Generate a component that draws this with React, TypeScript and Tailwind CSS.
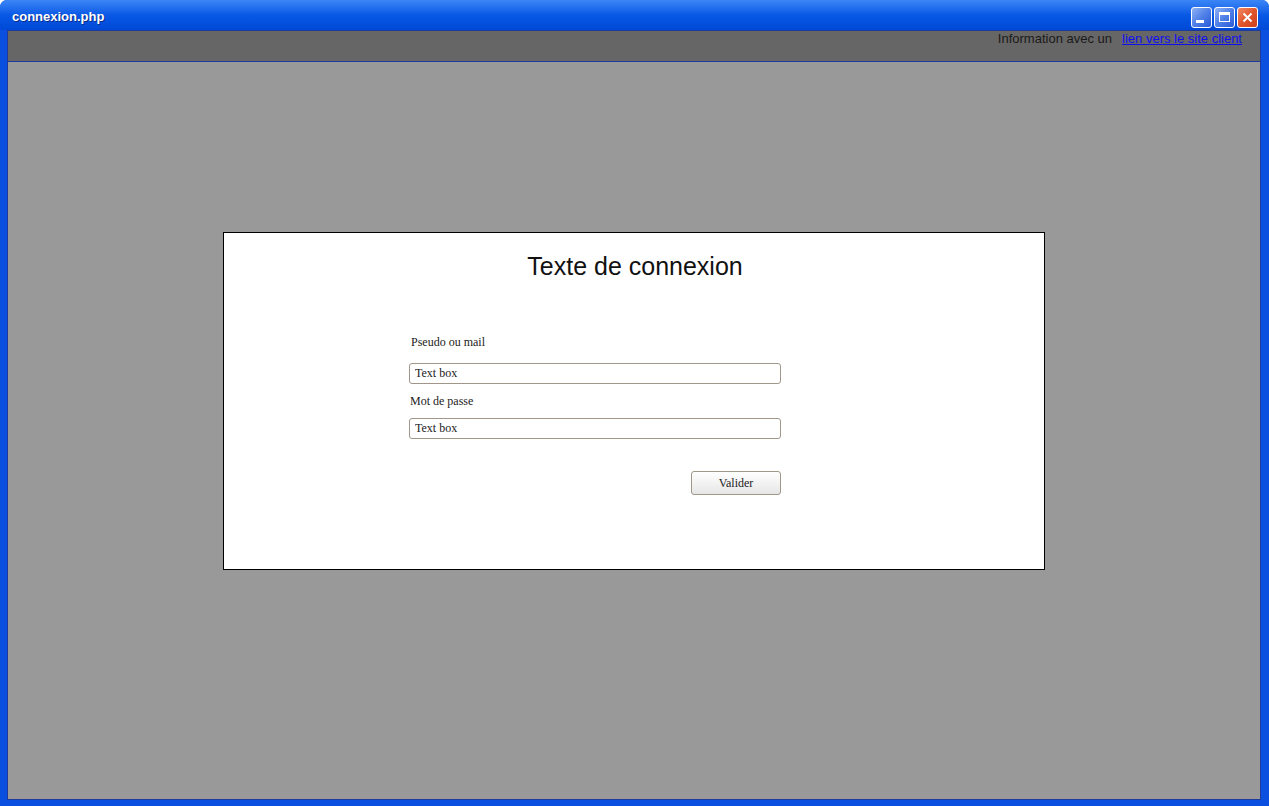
import React from "react";

function TitleButton({ kind }: { kind: "min" | "max" | "close" }) {
  const bg =
    kind === "close"
      ? "bg-gradient-to-br from-[#f08a63] via-[#e1552a] to-[#c9401b]"
      : "bg-gradient-to-br from-[#8fb2f5] via-[#4f7fe8] to-[#2a5bd6]";
  return (
    <div
      className={`w-[21px] h-[21px] rounded-[3px] border border-white flex items-center justify-center ${bg}`}
    >
      {kind === "min" && <div className="w-[8px] h-[3px] bg-white mt-[8px] -ml-[3px]" />}
      {kind === "max" && <div className="w-[11px] h-[10px] border border-white border-t-[3px]" />}
      {kind === "close" && (
        <svg width="11" height="11" viewBox="0 0 11 11">
          <path d="M1.5 1.5 L9.5 9.5 M9.5 1.5 L1.5 9.5" stroke="white" strokeWidth="2" />
        </svg>
      )}
    </div>
  );
}

export default function App() {
  return (
    <div className="w-[1269px] h-[806px] flex flex-col bg-[#0a4fe0] rounded-t-[7px] overflow-hidden">
      {/* title bar */}
      <div className="h-[30px] shrink-0 flex items-center justify-between pl-[12px] pr-[11px] bg-gradient-to-b from-[#3b86f5] via-[#0858e6] to-[#0049d6]">
        <span
          className="text-white font-bold text-[13px] mt-[3px] [text-shadow:1px_1px_0_#0a2a8a]"
          style={{ fontFamily: '"Liberation Sans", Arial, sans-serif' }}
        >
          connexion.php
        </span>
        <div className="flex gap-[2px] mt-[4px]">
          <TitleButton kind="min" />
          <TitleButton kind="max" />
          <TitleButton kind="close" />
        </div>
      </div>

      {/* client area */}
      <div className="flex-1 flex flex-col ml-[7px] mr-[8px] mb-[6px] border border-[#1e3a9a]">
        <div
          className="h-[31px] shrink-0 bg-[#666666] border-b border-[#1e3a9a] flex justify-end pr-[18px] text-[13px] text-[#1a1a1a]"
          style={{ fontFamily: '"Liberation Sans", Arial, sans-serif' }}
        >
          <span className="leading-[15px]">Information avec un</span>
          <a href="#" className="ml-[10px] leading-[15px] text-[#1010ee] underline">
            lien vers le site client
          </a>
        </div>

        <div className="flex-1 bg-[#999999] flex justify-center pt-[170px]">
          <div className="w-[822px] h-[338px] bg-white border border-black flex flex-col">
            <h1
              className="text-center text-[25px] leading-[29px] text-[#111] pt-[19px] pl-[2px]"
              style={{ fontFamily: '"Liberation Sans", Arial, sans-serif' }}
            >
              Texte de connexion
            </h1>
            <form
              className="ml-[185px] w-[372px] flex flex-col mt-[54px] text-[12px] text-[#222]"
              style={{ fontFamily: '"Liberation Serif", "Times New Roman", serif' }}
            >
              <label className="leading-[14px] pl-[2px]">Pseudo ou mail</label>
              <input
                type="text"
                defaultValue="Text box"
                className="mt-[14px] h-[21px] border border-[#a0968a] rounded-[3px] px-[5px] text-[12px] outline-none"
              />
              <label className="leading-[14px] mt-[10px] pl-[1px]">Mot de passe</label>
              <input
                type="text"
                defaultValue="Text box"
                className="mt-[10px] h-[21px] border border-[#a0968a] rounded-[3px] px-[5px] text-[12px] outline-none"
              />
              <div className="flex justify-end mt-[32px]">
                <button
                  type="button"
                  className="w-[90px] h-[24px] border border-[#a0968a] rounded-[3px] bg-gradient-to-b from-white to-[#e6e6e6] text-[12px] text-[#222]"
                >
                  Valider
                </button>
              </div>
            </form>
          </div>
        </div>
      </div>
    </div>
  );
}
